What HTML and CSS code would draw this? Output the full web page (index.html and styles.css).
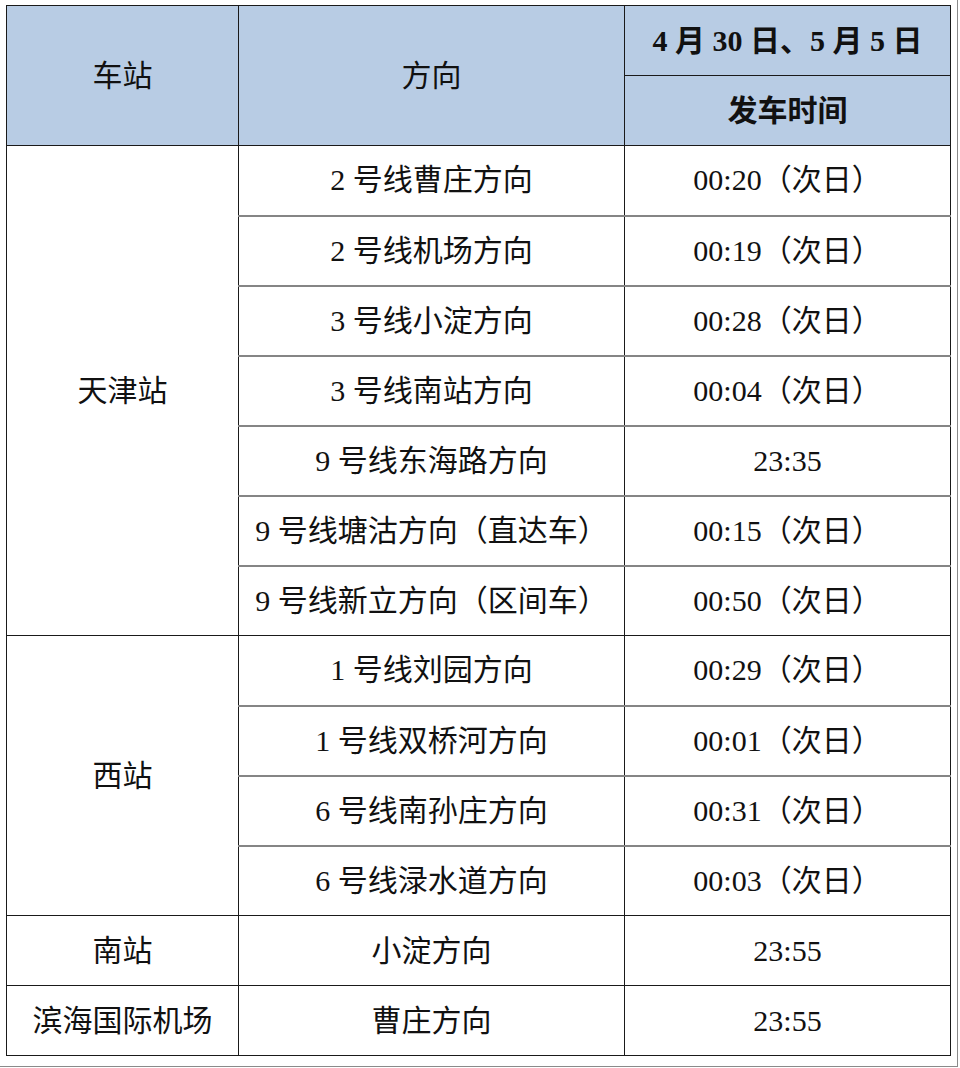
FILE: index.html
```html
<!DOCTYPE html>
<html lang="zh">
<head>
<meta charset="utf-8">
<link rel="stylesheet" href="styles.css">
</head>
<body>
<div class="frame">
<table class="schedule">
<colgroup><col class="c1"><col class="c2"><col class="c3"></colgroup>
<thead>
<tr>
<th rowspan="2" class="h">车站</th>
<th rowspan="2" class="h">方向</th>
<th class="h date">4 月 30 日、5 月 5 日</th>
</tr>
<tr><th class="h sub">发车时间</th></tr>
</thead>
<tbody>
<tr class="g"><td rowspan="7" class="st">天津站</td><td>2 号线曹庄方向</td><td>00:20（次日）</td></tr>
<tr><td>2 号线机场方向</td><td>00:19（次日）</td></tr>
<tr><td>3 号线小淀方向</td><td>00:28（次日）</td></tr>
<tr><td>3 号线南站方向</td><td>00:04（次日）</td></tr>
<tr><td>9 号线东海路方向</td><td>23:35</td></tr>
<tr><td>9 号线塘沽方向（直达车）</td><td>00:15（次日）</td></tr>
<tr><td>9 号线新立方向（区间车）</td><td>00:50（次日）</td></tr>
<tr class="g"><td rowspan="4" class="st">西站</td><td>1 号线刘园方向</td><td>00:29（次日）</td></tr>
<tr><td>1 号线双桥河方向</td><td>00:01（次日）</td></tr>
<tr><td>6 号线南孙庄方向</td><td>00:31（次日）</td></tr>
<tr><td>6 号线渌水道方向</td><td>00:03（次日）</td></tr>
<tr class="g"><td class="st">南站</td><td>小淀方向</td><td>23:55</td></tr>
<tr class="g"><td class="st">滨海国际机场</td><td>曹庄方向</td><td>23:55</td></tr>
</tbody>
</table>
</div>
</body>
</html>
```
FILE: styles.css
```css
html, body {
  margin: 0;
  padding: 0;
  background: #fff;
}
.frame {
  width: 958px;
  height: 1067px;
  border-right: 1px solid #8a8a8a;
  border-bottom: 1px solid #8a8a8a;
  box-sizing: border-box;
  padding: 5px 0 0 6px;
}
.schedule {
  border-collapse: collapse;
  table-layout: fixed;
  width: 944px;
  font-family: "Liberation Serif", "Noto Sans CJK SC", serif;
  font-size: 30px;
  color: #111;
}
.c1 { width: 232px; }
.c2 { width: 386px; }
.c3 { width: 326px; }
.schedule tr {
  height: 70px;
}
.schedule th, .schedule td {
  border: 1px solid #1a1a1a;
  height: 68px;
  padding: 0;
  text-align: center;
  vertical-align: middle;
  line-height: 1;
}
.schedule tbody td {
  border-top: 2px solid #858585;
}
.schedule tbody tr.g td {
  border-top: 1px solid #1a1a1a;
}
.schedule td.st {
  border-top: 1px solid #1a1a1a;
}
.h {
  background: #b8cce4;
  font-weight: normal;
}
.date, .sub {
  font-weight: bold;
}
```
